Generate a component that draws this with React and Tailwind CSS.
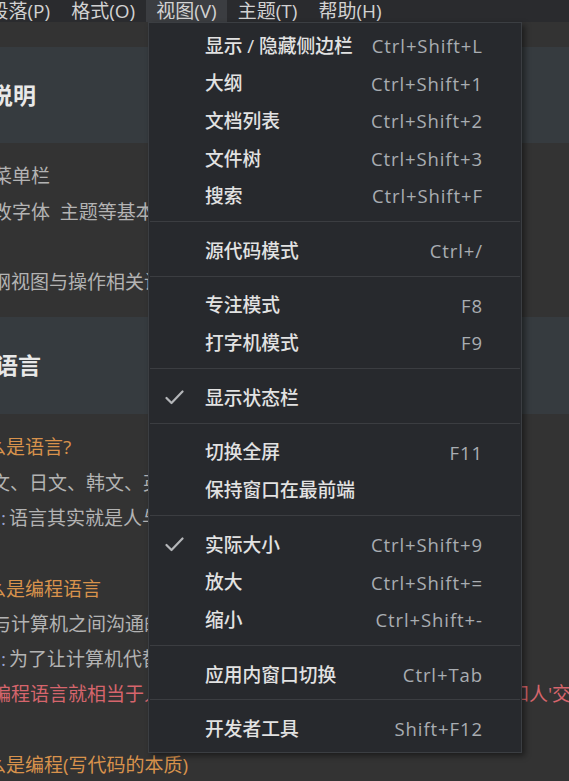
import React from 'react';

const groups = [
  [
    { label: '显示 / 隐藏侧边栏', sc: 'Ctrl+Shift+L' },
    { label: '大纲', sc: 'Ctrl+Shift+1' },
    { label: '文档列表', sc: 'Ctrl+Shift+2' },
    { label: '文件树', sc: 'Ctrl+Shift+3' },
    { label: '搜索', sc: 'Ctrl+Shift+F' },
  ],
  [{ label: '源代码模式', sc: 'Ctrl+/' }],
  [
    { label: '专注模式', sc: 'F8' },
    { label: '打字机模式', sc: 'F9' },
  ],
  [{ label: '显示状态栏', sc: '', checked: true }],
  [
    { label: '切换全屏', sc: 'F11' },
    { label: '保持窗口在最前端', sc: '' },
  ],
  [
    { label: '实际大小', sc: 'Ctrl+Shift+9', checked: true },
    { label: '放大', sc: 'Ctrl+Shift+=' },
    { label: '缩小', sc: 'Ctrl+Shift+-' },
  ],
  [{ label: '应用内窗口切换', sc: 'Ctrl+Tab' }],
  [{ label: '开发者工具', sc: 'Shift+F12' }],
];

const menus = ['段落(P)', '格式(O)', '视图(V)', '主题(T)', '帮助(H)'];

function Check() {
  return (
    <svg width="19" height="15" viewBox="0 0 19 15" fill="none">
      <polyline points="1.5,8 6.5,13 17.5,1.5" stroke="#b4b6b9" strokeWidth="2.2" strokeLinecap="round" strokeLinejoin="round" />
    </svg>
  );
}

function Row({ children, className = '' }) {
  return <div className={`h-[35.3px] flex items-center whitespace-pre ${className}`}>{children}</div>;
}

export default function App() {
  return (
    <div className="relative w-[569px] h-[781px] overflow-hidden bg-[#333333] font-['Open_Sans','Noto_Sans_CJK_SC',sans-serif]">
      {/* menu bar */}
      <div className="h-[22px] bg-[#2a2b2e] flex ml-[-21px] text-[19px] leading-[22px] text-[#d2d2d2]">
        {menus.map((m) => (
          <div key={m} className={`px-[10.5px] h-[22px] flex items-center ${m === '视图(V)' ? 'bg-[#3b3d41]' : ''}`}>
            {m}
          </div>
        ))}
      </div>

      {/* document */}
      <div className="text-[19px] text-[#b3b3b3]">
        <div className="h-[25px]" />
        <div className="h-[96px] bg-[#363b3f] flex items-center">
          <span className="ml-[-10px] text-[23px] font-bold text-[#e8e8e8]">说明</span>
        </div>
        <div className="h-[174px] pt-[16px]">
          <Row><span className="ml-[-7px]">菜单栏</span></Row>
          <Row><span className="ml-[-26px]">修改字体  主题等基本设置</span></Row>
          <Row />
          <Row><span className="ml-[-8px]">纲视图与操作相关设置</span></Row>
        </div>
        <div className="h-[97px] bg-[#363b3f] flex items-center">
          <span className="ml-[-5px] text-[23px] font-bold text-[#e8e8e8]">语言</span>
        </div>
        <div className="pt-[16px]">
          <Row className="text-[#d8924c]"><span className="ml-[-13px]">么是语言?</span></Row>
          <Row><span className="ml-[-9px]">文、日文、韩文、英文</span></Row>
          <Row><span className="ml-[1px]"><span className="text-[#98a2cf] mr-[3px]">:</span>语言其实就是人与人之间沟通的工具</span></Row>
          <Row />
          <Row className="text-[#d8924c]"><span className="ml-[-13px]">么是编程语言</span></Row>
          <Row><span className="ml-[-8px]">与计算机之间沟通的工具</span></Row>
          <Row><span className="ml-[1px]"><span className="text-[#98a2cf] mr-[3px]">:</span>为了让计算机代替人类工作</span></Row>
          <Row className="text-[#d6656c]"><span className="ml-[-8px]">编程语言就相当于人与计算机之间沟通的翻译官,能够让计算机和人'交流'</span></Row>
          <Row />
          <Row className="text-[#d8924c]"><span className="ml-[-13px]">么是编程(写代码的本质)</span></Row>
        </div>
      </div>

      {/* dropdown */}
      <div className="absolute top-[22px] left-[148px] w-[374px] bg-[#27292d] border border-[#3b3e42] shadow-[3px_3px_6px_rgba(0,0,0,0.45)] pt-[4px] pb-[4px]">
        {groups.map((g, gi) => (
          <div key={gi}>
            {gi > 0 && <div className="mt-[6px] mb-[10.1px] mx-[1px] h-px bg-[#3b3d41]" />}
            {g.map((it) => (
              <div key={it.label} className="h-[37.6px] flex items-center pr-[39px]">
                <div className="w-[56px] pl-[16px] flex items-center">{it.checked && <Check />}</div>
                <div className="flex-1 text-[18.75px] font-medium text-[#e2e2e2]">{it.label}</div>
                <div className="text-[18.5px] tracking-[0.9px] mr-[-0.9px] text-[#a9adb2]">{it.sc}</div>
              </div>
            ))}
          </div>
        ))}
      </div>
    </div>
  );
}
